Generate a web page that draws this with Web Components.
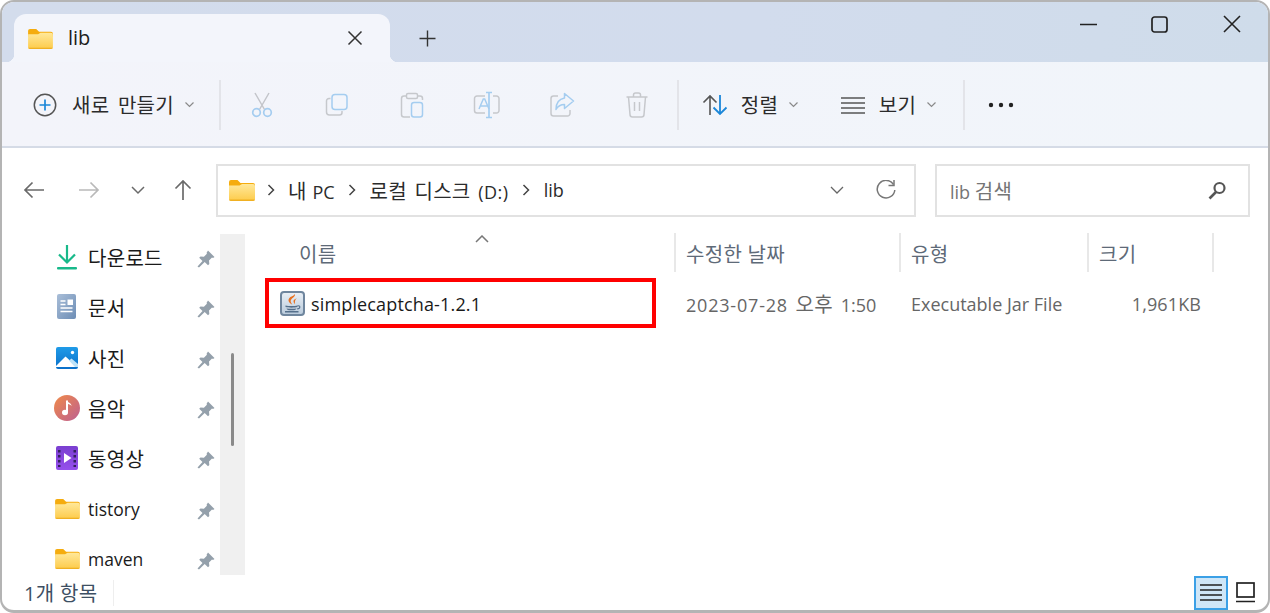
<!DOCTYPE html>
<html lang="ko">
<head>
<meta charset="utf-8">
<title>lib</title>
<style>
  html, body { margin: 0; padding: 0; background: #fff; }
  body { font-family: "Open Sans", "Noto Sans CJK KR", sans-serif; }
</style>
</head>
<body>
<explorer-window>
  <title-tabs title-text="lib"></title-tabs>
  <cmd-bar></cmd-bar>
  <addr-bar></addr-bar>
  <div style="display:flex;flex:1;min-height:0">
    <nav-pane>
      <nav-item icon="download" ko pinned>다운로드</nav-item>
      <nav-item icon="docs" ko pinned>문서</nav-item>
      <nav-item icon="pics" ko pinned>사진</nav-item>
      <nav-item icon="music" ko pinned>음악</nav-item>
      <nav-item icon="video" ko pinned>동영상</nav-item>
      <nav-item icon="folder" pinned>tistory</nav-item>
      <nav-item icon="folder" pinned>maven</nav-item>
    </nav-pane>
    <file-list></file-list>
  </div>
  <status-bar>1개 항목</status-bar>
</explorer-window>

<script>
const FONT = '"Open Sans", "Noto Sans CJK KR", sans-serif';
// Korean runs are set larger than latin ones, as Malgun Gothic looks next to Segoe UI
const KO = "font-size: 20px; letter-spacing: .3px;";

const folderSvg = (w, h) => `<svg width="${w}" height="${h}" viewBox="0 0 26 22">
  <defs><linearGradient id="fb" x1="0" y1="0" x2="0" y2="1"><stop offset="0" stop-color="#ffe89a"/><stop offset="1" stop-color="#fdcb4a"/></linearGradient></defs>
  <path d="M0 3a2 2 0 0 1 2-2h6.5l3 3H24a2 2 0 0 1 2 2v3H0z" fill="#f5ac0e"/>
  <path d="M0 6.5h10.5l2.5-1.5H24a2 2 0 0 1 2 2V20a2 2 0 0 1-2 2H2a2 2 0 0 1-2-2z" fill="url(#fb)"/>
  <path d="M0 20.6h26V20a2 2 0 0 1-2 2H2a2 2 0 0 1-2-2z" fill="#f0b022"/>
</svg>`;

const icons = {
  folder: folderSvg(25, 21),
  download: `<svg width="22" height="26" viewBox="0 0 22 26"><path d="M11 1v17M3 10.5l8 8 8-8" fill="none" stroke="#18b98a" stroke-width="2.2"/><rect x="1" y="23" width="20" height="2.4" rx="1" fill="#18b98a"/></svg>`,
  docs: `<svg width="20" height="26" viewBox="0 0 20 26"><defs><linearGradient id="dg" x1="0" y1="0" x2="1" y2="1"><stop offset="0" stop-color="#a9bed8"/><stop offset="1" stop-color="#6d8db5"/></linearGradient></defs><rect width="19" height="25" rx="2" fill="url(#dg)"/><path d="M3.5 7h5M3.5 10.5h5M3.5 14h12M3.5 17.5h12" stroke="#fff" stroke-width="1.4"/><rect x="10.500" y="5.500" width="5.500" height="5.500" fill="#fff"/></svg>`,
  pics: `<svg width="22" height="22" viewBox="0 0 22 22"><defs><linearGradient id="pg" x1="0" y1="0" x2="0" y2="1"><stop offset="0" stop-color="#1f9be8"/><stop offset="1" stop-color="#0a6fc9"/></linearGradient></defs><rect width="22" height="22" rx="2" fill="url(#pg)"/><path d="M0 19l9.500-9.500L20 19v1H0z" fill="#fff"/><path d="M13 13.500l2.500-2L22 17v3h-3z" fill="#bfe3f8"/><circle cx="16.500" cy="5.500" r="1.700" fill="#fff"/></svg>`,
  music: `<svg width="26" height="26" viewBox="0 0 26 26"><defs><linearGradient id="mg" x1="0" y1="0" x2="1" y2="1"><stop offset="0" stop-color="#f08a48"/><stop offset="1" stop-color="#bd5f92"/></linearGradient></defs><circle cx="13" cy="13" r="13" fill="url(#mg)"/><path d="M13 5.500v11.500" stroke="#fff" stroke-width="2"/><ellipse cx="11" cy="17.500" rx="3" ry="2.700" fill="#fff"/><path d="M13 5.500c1 2.500 4.500 2.500 4.500 5.500-1-1.500-3-2-4.500-2z" fill="#fff"/></svg>`,
  video: `<svg width="22" height="24" viewBox="0 0 22 24"><defs><linearGradient id="vg" x1="0" y1="0" x2="0" y2="1"><stop offset="0" stop-color="#7a3fd0"/><stop offset="1" stop-color="#9550ec"/></linearGradient></defs><rect width="22" height="24" rx="2" fill="url(#vg)"/><path d="M8 7l7.500 5L8 17z" fill="#fff"/><g fill="#33205c"><rect x="2" y="4" width="2.500" height="2.500"/><rect x="2" y="9" width="2.500" height="2.500"/><rect x="2" y="14" width="2.500" height="2.500"/><rect x="2" y="19" width="2.500" height="2"/><rect x="17.500" y="4" width="2.500" height="2.500"/><rect x="17.500" y="9" width="2.500" height="2.500"/><rect x="17.500" y="14" width="2.500" height="2.500"/><rect x="17.500" y="19" width="2.500" height="2"/></g></svg>`,
  pin: `<svg width="18" height="18" viewBox="0 0 18 18"><path d="M11 0.500l6.500 6.500-1.500 1-1-.4-3 3 .3 3.400-1.300 1.300-3.300-3.300L2 17.500l-1.500-1 5-5.500-3.300-3.300L3.500 6.500l3.400.3 3-3-.3-1.100z" fill="#94a0ab"/></svg>`,
  plus: `<svg width="24" height="24" viewBox="0 0 24 24"><circle cx="12" cy="12" r="10.700" fill="none" stroke="#555" stroke-width="1.500"/><path d="M12 6.500v11M6.500 12h11" stroke="#1a86d8" stroke-width="1.700"/></svg>`,
  cut: `<svg width="24" height="26" viewBox="0 0 24 26"><path d="M5 1l9.500 16.500M19 1L9.500 17.500" fill="none" stroke="#c3c5ca" stroke-width="1.500"/><circle cx="6.500" cy="20.500" r="3.800" fill="none" stroke="#a5cdf0" stroke-width="1.700"/><circle cx="17.500" cy="20.500" r="3.800" fill="none" stroke="#a5cdf0" stroke-width="1.700"/></svg>`,
  copy: `<svg width="24" height="24" viewBox="0 0 24 24"><path d="M5.500 5.500H4a2.500 2.500 0 0 0-2.500 2.500v11A3 3 0 0 0 4.500 22h10a2.500 2.500 0 0 0 2.500-2.500V18" fill="none" stroke="#c6c8cc" stroke-width="1.500"/><rect x="7" y="1.500" width="15" height="15" rx="3" fill="#f3f5fb" stroke="#a5cdf0" stroke-width="1.500"/></svg>`,
  paste: `<svg width="24" height="26" viewBox="0 0 24 26"><path d="M6 4H4a2.500 2.500 0 0 0-2.500 2.500v16A2.500 2.500 0 0 0 4 25h6M18 4h2a2.500 2.500 0 0 1 2.500 2.500V8" fill="none" stroke="#c6c8cc" stroke-width="1.500"/><rect x="6.500" y="1.500" width="11" height="5" rx="1.500" fill="none" stroke="#c6c8cc" stroke-width="1.500"/><rect x="11.500" y="10.500" width="11" height="14.500" rx="2.500" fill="none" stroke="#a5cdf0" stroke-width="1.500"/></svg>`,
  rename: `<svg width="28" height="28" viewBox="0 0 28 28"><path d="M12 5H4a2.500 2.500 0 0 0-2.500 2.500v12A2.500 2.500 0 0 0 4 22h8M20 5h3.500A2.500 2.500 0 0 1 26 7.500v12a2.500 2.500 0 0 1-2.500 2.500H20" fill="none" stroke="#c6c8cc" stroke-width="1.500"/><path d="M6 18l4.300-10h1.400L16 18M7.500 15h7" fill="none" stroke="#a5cdf0" stroke-width="1.500"/><path d="M16 1.500v25M13 1.500h6M13 26.500h6" fill="none" stroke="#a5cdf0" stroke-width="1.700"/></svg>`,
  share: `<svg width="26" height="26" viewBox="0 0 26 26"><path d="M9 4H4.500A2.500 2.500 0 0 0 2 6.500v15A2.500 2.500 0 0 0 4.500 24h14a2.500 2.500 0 0 0 2.500-2.500V18" fill="none" stroke="#c6c8cc" stroke-width="1.500"/><path d="M15.500 1.500l9 7.500-9 7.500v-4c-4 0-6.500 1.500-8.500 5 0-6 3-10.500 8.500-11.500z" fill="none" stroke="#a5cdf0" stroke-width="1.500" stroke-linejoin="round"/></svg>`,
  trash: `<svg width="24" height="26" viewBox="0 0 24 26"><path d="M1.500 5h21M8.500 5V3a2 2 0 0 1 2-2h3a2 2 0 0 1 2 2v2M3.500 5l1.500 17.500a2.500 2.500 0 0 0 2.500 2.500h9a2.500 2.500 0 0 0 2.500-2.500L20.500 5M9.500 10v9M14.500 10v9" fill="none" stroke="#c6c8cc" stroke-width="1.500"/></svg>`,
  sort: `<svg width="26" height="24" viewBox="0 0 26 24"><path d="M8 22V3M1.500 9.500L8 3l6.500 6.500" fill="none" stroke="#555" stroke-width="1.600"/><path d="M18 2v19M11.500 14.500L18 21l6.500-6.500" fill="none" stroke="#1a86d8" stroke-width="1.800"/></svg>`,
  lines: `<svg width="26" height="18" viewBox="0 0 26 18"><path d="M1 2h24M1 7h24M1 12h24M1 17h24" fill="none" stroke="#555" stroke-width="1.500"/></svg>`,
  more: `<svg width="26" height="6" viewBox="0 0 26 6"><circle cx="3" cy="3" r="2.200" fill="#222"/><circle cx="13" cy="3" r="2.200" fill="#222"/><circle cx="23" cy="3" r="2.200" fill="#222"/></svg>`,
  java: `<svg width="25" height="25" viewBox="0 0 25 25"><defs><linearGradient id="jg" x1="0" y1="0" x2="0" y2="1"><stop offset="0" stop-color="#eaf0f6"/><stop offset="1" stop-color="#b9cadb"/></linearGradient></defs><rect x="1" y="1" width="23" height="23" rx="3" fill="url(#jg)" stroke="#6f869e" stroke-width="2"/><path d="M15 3c.8 3-4.800 4.500-4.300 7.500.2 1 .9 1.800 1.500 3-3-1.700-4.700-3.800-3-6.300C10.300 5.500 14 5 15 3zM17 7c-2.500 1.200-4 2.300-3.400 4 .3.800.6 1.300.7 2.200 1.500-1.700-.6-3 2.700-6.200z" fill="#e8701f"/><path d="M5.500 14.500c3.200.8 8.800.8 12 0v1.600c-3.200.8-8.800.8-12 0zM6.500 17.400c2.800.6 7.200.6 10 0-.4 1.300-1.800 1.800-5 1.800s-4.600-.5-5-1.800zM5 20h13.500v1.500H5z" fill="#55708c"/><path d="M17.500 14.800c3-.6 3.300 2.700-.3 3.100" fill="none" stroke="#55708c" stroke-width="1.100"/></svg>`
};

class ExplorerWindow extends HTMLElement {
  constructor() {
    super();
    this.attachShadow({ mode: "open" });
    this.shadowRoot.innerHTML = /*html*/ `
      <style>
        :host {
          display: flex;
          flex-direction: column;
          box-sizing: border-box;
          width: 1270px;
          height: 613px;
          overflow: hidden;
          background: #fff;
          border: 2px solid #b4b4b4;
          border-bottom-width: 3px;
          border-radius: 14px;
          font-family: ${FONT};
          color: #1c1c1c;
        }
      </style>
      <slot></slot>
    `;
  }
}

class TitleTabs extends HTMLElement {
  constructor() {
    super();
    this.attachShadow({ mode: "open" });
    this.shadowRoot.innerHTML = /*html*/ `
      <style>
        :host {
          display: flex;
          flex: none;
          height: 60px;
          background: linear-gradient(90deg, #d3dcec, #d2dced 60%, #cfdcea);
          box-sizing: border-box;
          padding-top: 12px;
          padding-left: 12px;
        }
        .tab {
          position: relative;
          display: flex;
          align-items: center;
          width: 376px;
          box-sizing: border-box;
          padding: 0 27px 0 14px;
          background: #f3f5fb;
          border-radius: 12px 12px 0 0;
        }
        .tab::before, .tab::after {
          content: "";
          position: absolute;
          bottom: 0;
          width: 8px;
          height: 8px;
        }
        .tab::before { left: -8px; background: radial-gradient(circle at 0 0, transparent 8px, #f3f5fb 8.5px); }
        .tab::after { right: -8px; background: radial-gradient(circle at 100% 0, transparent 8px, #f3f5fb 8.5px); }
        .name { margin-left: 15px; flex: 1; font-size: 20px; line-height: 24px; font-weight: 500; }
        .close, .new { display: block; }
        .new { margin: 16px 0 0 29px; }
        .caps { margin-left: auto; display: flex; align-items: flex-start; }
        .caps svg { display: block; }
        .caps span { width: 71px; height: 46px; display: flex; justify-content: center; align-items: center; margin-top: -13px; }
      </style>
      <div class="tab">
        ${icons.folder}
        <span class="name"></span>
        <svg class="close" width="16" height="16" viewBox="0 0 16 16"><path d="M1.500 1.500l13 13M14.500 1.500l-13 13" stroke="#333" stroke-width="1.500"/></svg>
      </div>
      <svg class="new" width="17" height="17" viewBox="0 0 17 17"><path d="M8.500 .5v16M.5 8.500h16" stroke="#333" stroke-width="1.400"/></svg>
      <div class="caps">
        <span><svg width="17" height="3" viewBox="0 0 17 3"><path d="M0 1.500h17" stroke="#222" stroke-width="1.700"/></svg></span>
        <span><svg width="17" height="17" viewBox="0 0 17 17"><rect x="1" y="1" width="15" height="15" rx="2.500" fill="none" stroke="#222" stroke-width="1.700"/></svg></span>
        <span style="width:73px"><svg width="18" height="18" viewBox="0 0 18 18"><path d="M1 1l16 16M17 1L1 17" stroke="#222" stroke-width="1.600"/></svg></span>
      </div>
    `;
    this.shadowRoot.querySelector(".name").textContent = this.getAttribute("title-text");
  }
}

class ToolBtn extends HTMLElement {
  constructor() {
    super();
    this.attachShadow({ mode: "open" });
    this.shadowRoot.innerHTML = /*html*/ `
      <style>
        :host { display: flex; align-items: center; justify-content: center; height: 100%; ${KO} word-spacing: 3px; color: #2b2b2b; }
        .label { margin-left: var(--label-gap, 13px); white-space: nowrap; }
        .chev { margin-left: 11px; }
        svg { display: block; flex: none; }
      </style>
      ${icons[this.getAttribute("icon")]}
      <span class="label" ${this.hasAttribute("label") ? "" : "hidden"}>${this.getAttribute("label") || ""}</span>
      ${this.hasAttribute("label") ? '<svg class="chev" width="9" height="6" viewBox="0 0 9 6"><path d="M.5 .5l4 4 4-4" fill="none" stroke="#8a8a8a" stroke-width="1.200"/></svg>' : ""}
    `;
  }
}

class CmdBar extends HTMLElement {
  constructor() {
    super();
    this.attachShadow({ mode: "open" });
    this.shadowRoot.innerHTML = /*html*/ `
      <style>
        :host {
          display: flex;
          flex: none;
          align-items: center;
          box-sizing: border-box;
          height: 86px;
          padding: 1px 0 0 20px;
          background: linear-gradient(90deg, #f3f4fa, #f1f5fa);
          border-bottom: 2px solid #d5dbe6;
        }
        .sep { flex: none; width: 2px; height: 50px; background: #e3e4e9; }
        tool-btn { flex: none; width: 75px; }
        .new { width: 183px; margin-right: 14px; --label-gap: 15px; }
        .group { display: flex; height: 100%; margin: 0 3px; }
        .sort { width: 100px; margin-left: 21px; margin-right: 38px; }
        .view { width: 100px; margin-right: 25px; }
        .more { width: 28px; margin-left: 22px; }
      </style>
      <tool-btn class="new" icon="plus" label="새로 만들기"></tool-btn>
      <div class="sep"></div>
      <div class="group">
        <tool-btn icon="cut"></tool-btn>
        <tool-btn icon="copy"></tool-btn>
        <tool-btn icon="paste"></tool-btn>
        <tool-btn icon="rename"></tool-btn>
        <tool-btn icon="share"></tool-btn>
        <tool-btn icon="trash"></tool-btn>
      </div>
      <div class="sep"></div>
      <tool-btn class="sort" icon="sort" label="정렬"></tool-btn>
      <tool-btn class="view" icon="lines" label="보기"></tool-btn>
      <div class="sep"></div>
      <tool-btn class="more" icon="more"></tool-btn>
    `;
  }
}

class AddrBar extends HTMLElement {
  constructor() {
    super();
    this.attachShadow({ mode: "open" });
    this.shadowRoot.innerHTML = /*html*/ `
      <style>
        :host {
          display: flex;
          flex: none;
          align-items: center;
          box-sizing: border-box;
          height: 84px;
          font-size: 18px;
          color: #2b2b2b;
        }
        svg { display: block; flex: none; }
        .nav { display: flex; align-items: center; width: 214px; flex: none; padding-left: 21px; box-sizing: border-box; }
        .box {
          display: flex;
          flex: none;
          align-items: center;
          box-sizing: border-box;
          height: 53px;
          border: 2px solid #e2e2e2;
          background: #fff;
        }
        .path { width: 700px; padding: 0 18px 0 11px; margin-right: 19px; }
        .search { width: 315px; padding: 0 21px 0 13px; color: #757575; justify-content: space-between; }
        .crumb { margin: 0 14px 0 13px; }
        .crumb.first { margin: 0 13px 0 12px; }
        .ko { ${KO} }
        .me { word-spacing: 1px; }
        .disk { word-spacing: 3px; }
        .disk .ko { word-spacing: 2px; }
        .drive { letter-spacing: .5px; }
        .grow { flex: 1; }
      </style>
      <div class="nav">
        <svg width="22" height="18" viewBox="0 0 22 18" style="margin-right:33px"><path d="M21 9H2M9.500 1.500L2 9l7.500 7.500" fill="none" stroke="#6a6a6a" stroke-width="1.700"/></svg>
        <svg width="22" height="18" viewBox="0 0 22 18" style="margin-right:31px"><path d="M1 9h19M12.500 1.500L20 9l-7.500 7.500" fill="none" stroke="#b9b9b9" stroke-width="1.700"/></svg>
        <svg width="14" height="9" viewBox="0 0 14 9" style="margin-right:29px"><path d="M1 1l6 6 6-6" fill="none" stroke="#6a6a6a" stroke-width="1.500"/></svg>
        <svg width="18" height="22" viewBox="0 0 18 22"><path d="M9 21V2M1.500 9.500L9 2l7.500 7.500" fill="none" stroke="#6a6a6a" stroke-width="1.700"/></svg>
      </div>
      <div class="box path">
        ${folderSvg(26, 22)}
        <svg class="crumb first" width="8" height="12" viewBox="0 0 8 12"><path d="M1.500 1l5 5-5 5" fill="none" stroke="#444" stroke-width="1.500"/></svg>
        <span class="me"><span class="ko">내</span> PC</span>
        <svg class="crumb" width="8" height="12" viewBox="0 0 8 12"><path d="M1.500 1l5 5-5 5" fill="none" stroke="#444" stroke-width="1.500"/></svg>
        <span class="disk"><span class="ko">로컬 디스크</span> <span class="drive">(D:)</span></span>
        <svg class="crumb" width="8" height="12" viewBox="0 0 8 12"><path d="M1.500 1l5 5-5 5" fill="none" stroke="#444" stroke-width="1.500"/></svg>
        <span>lib</span>
        <span class="grow"></span>
        <svg width="14" height="8" viewBox="0 0 14 8" style="margin-right:32px"><path d="M1 1l6 6 6-6" fill="none" stroke="#666" stroke-width="1.300"/></svg>
        <svg width="20" height="20" viewBox="0 0 20 20"><path d="M17.500 4.500A8.800 8.800 0 1 0 18.800 10" fill="none" stroke="#777" stroke-width="1.500"/><path d="M18 0v5.500h-5.500" fill="none" stroke="#777" stroke-width="1.500"/></svg>
      </div>
      <div class="box search">
        <span>lib <span class="ko">검색</span></span>
        <svg width="19" height="19" viewBox="0 0 19 19"><circle cx="11.500" cy="7" r="5" fill="none" stroke="#555" stroke-width="2.200"/><path d="M8 11l-6.500 6.500" stroke="#555" stroke-width="2.600"/></svg>
      </div>
    `;
  }
}

class NavPane extends HTMLElement {
  constructor() {
    super();
    this.attachShadow({ mode: "open" });
    this.shadowRoot.innerHTML = /*html*/ `
      <style>
        :host { display: flex; flex: none; width: 246px; height: 343px; overflow: hidden; }
        .items { width: 218px; flex: none; height: 100%; }
        .track {
          position: relative;
          width: 25px;
          flex: none;
          margin-top: 2px;
          background: #f0f0f0;
        }
        .thumb { position: absolute; left: 11px; top: 119px; width: 3px; height: 93px; border-radius: 2px; background: #8a8a8a; }
      </style>
      <div class="items"><slot></slot></div>
      <div class="track"><div class="thumb"></div></div>
    `;
  }
}

class NavItem extends HTMLElement {
  constructor() {
    super();
    this.attachShadow({ mode: "open" });
    this.shadowRoot.innerHTML = /*html*/ `
      <style>
        :host {
          display: grid;
          grid-template-columns: 26px 1fr 18px;
          align-items: center;
          column-gap: 8px;
          box-sizing: border-box;
          height: 50.3px;
          padding: 0 5px 0 52px;
          font-size: 17.5px;
          white-space: nowrap;
          color: #1a1a1a;
        }
        :host([ko]) { ${KO} }
        :host([ko]) .text { padding-top: 1px; }
        .icon { display: flex; justify-content: center; align-items: center; height: 100%; }
        svg { display: block; }
        .pin { position: relative; top: 2px; }
      </style>
      <span class="icon">${icons[this.getAttribute("icon")]}</span>
      <span class="text"><slot></slot></span>
      <span class="pin">${this.hasAttribute("pinned") ? icons.pin : ""}</span>
    `;
  }
}

class FileList extends HTMLElement {
  constructor() {
    super();
    this.attachShadow({ mode: "open" });
    this.shadowRoot.innerHTML = /*html*/ `
      <style>
        :host { display: block; position: relative; flex: 1; font-size: 18px; color: #5e6a78; }
        .grid { display: grid; grid-template-columns: 426px 225px 188px 125px; margin-left: 2px; }
        .head { height: 42px; padding-top: 1px; box-sizing: border-box; ${KO} }
        .head div {
          display: flex;
          align-items: center;
          height: 39px;
          padding: 2px 0 0 10px;
          border-right: 2px solid #e8e8e8;
          box-sizing: border-box;
        }
        .head div:first-child { padding-left: 49px; }
        .row { height: 49px; margin-top: 5px; align-items: center; color: #666; }
        .row > div { padding-left: 10px; white-space: nowrap; }
        .row .name { display: flex; align-items: center; gap: 6px; padding-left: 30px; color: #1a1a1a; letter-spacing: .15px; }
        .row .size { text-align: right; padding: 0 13px 0 0; letter-spacing: .1px; }
        .ko { ${KO} }
        .ymd { letter-spacing: .8px; }
        .when { word-spacing: 3px; }
        .caret { position: absolute; left: 227px; top: 3px; }
        .mark {
          position: absolute;
          left: 17px;
          top: 46px;
          width: 391px;
          height: 50px;
          box-sizing: border-box;
          border: 4px solid #f00;
        }
        svg { display: block; flex: none; }
      </style>
      <div class="grid head">
        <div>이름</div>
        <div>수정한 날짜</div>
        <div>유형</div>
        <div>크기</div>
      </div>
      <svg class="caret" width="14" height="8" viewBox="0 0 14 8"><path d="M1 7l6-6 6 6" fill="none" stroke="#777" stroke-width="1.500"/></svg>
      <div class="grid row">
        <div class="name">${icons.java}<span>simplecaptcha-1.2.1</span></div>
        <div class="when"><span class="ymd">2023-07-28</span> <span class="ko">오후</span> 1:50</div>
        <div>Executable Jar File</div>
        <div class="size">1,961KB</div>
      </div>
      <div class="mark"></div>
    `;
  }
}

class StatusBar extends HTMLElement {
  constructor() {
    super();
    this.attachShadow({ mode: "open" });
    this.shadowRoot.innerHTML = /*html*/ `
      <style>
        :host {
          display: flex;
          flex: none;
          align-items: center;
          box-sizing: border-box;
          height: 35px;
          padding: 0 13px 0 22px;
          ${KO}
          color: #3d4f63;
        }
        .text { width: 89px; white-space: nowrap; }
        .sep { width: 1px; height: 26px; background: #eee; }
        .views { margin-left: auto; display: flex; align-items: center; gap: 8px; }
        .btn { display: flex; align-items: center; justify-content: center; box-sizing: border-box; width: 34px; height: 34px; }
        .btn.on { background: #cfe6f7; border: 2px solid #3ba0e6; }
        svg { display: block; }
      </style>
      <span class="text"><slot></slot></span>
      <div class="sep"></div>
      <div class="views">
        <div class="btn on"><svg width="22" height="19" viewBox="0 0 22 19"><path d="M0 2h22M0 7h22M0 12h22M0 17h22" stroke="#222" stroke-width="1.700"/></svg></div>
        <div class="btn" style="width:19px"><svg width="19" height="21" viewBox="0 0 19 21"><rect x="1" y="1" width="17" height="14" fill="#fff" stroke="#222" stroke-width="1.700"/><path d="M0 19.500h19" stroke="#222" stroke-width="1.700"/></svg></div>
      </div>
    `;
  }
}

customElements.define("explorer-window", ExplorerWindow);
customElements.define("title-tabs", TitleTabs);
customElements.define("tool-btn", ToolBtn);
customElements.define("cmd-bar", CmdBar);
customElements.define("addr-bar", AddrBar);
customElements.define("nav-pane", NavPane);
customElements.define("nav-item", NavItem);
customElements.define("file-list", FileList);
customElements.define("status-bar", StatusBar);
</script>
</body>
</html>
